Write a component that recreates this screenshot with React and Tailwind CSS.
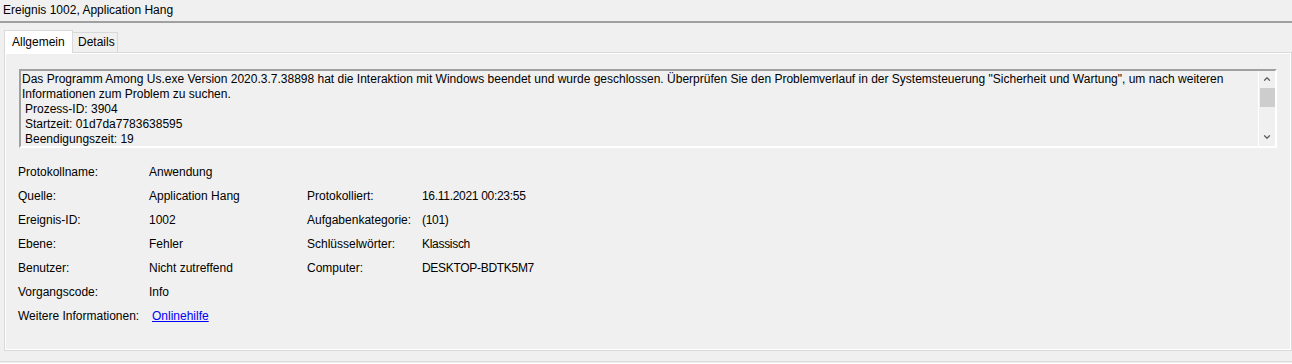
import { ChevronUp, ChevronDown } from 'lucide-react';

const rows = [
    { label: 'Protokollname:', value: 'Anwendung' },
    { label: 'Quelle:', value: 'Application Hang', label2: 'Protokolliert:', value2: '16.11.2021 00:23:55' },
    { label: 'Ereignis-ID:', value: '1002', label2: 'Aufgabenkategorie:', value2: '(101)' },
    { label: 'Ebene:', value: 'Fehler', label2: 'Schlüsselwörter:', value2: 'Klassisch' },
    { label: 'Benutzer:', value: 'Nicht zutreffend', label2: 'Computer:', value2: 'DESKTOP-BDTK5M7' },
    { label: 'Vorgangscode:', value: 'Info' },
];

export default function App() {
    return (
        <div className="w-[1292px] h-[364px] overflow-hidden bg-[#f0f0f0] text-[12px] text-black font-['Liberation_Sans',Arial,sans-serif] flex flex-col">
            {/* Title */}
            <div className="h-[23px] px-[3px] flex items-center border-b-2 border-[#a0a0a0] leading-none">
                Ereignis 1002, Application Hang
            </div>

            {/* Tabs */}
            <div className="flex items-end pl-[4px] pt-[6px] h-[29px]">
                <div className="h-[23px] w-[69px] pl-[7px] flex items-center bg-white border border-b-0 border-[#d9d9d9] relative top-[1px]">
                    Allgemein
                </div>
                <div className="h-[20px] w-[45px] pl-[5px] flex items-center border border-l-0 border-b-0 border-[#d9d9d9]">
                    Details
                </div>
            </div>

            {/* Panel */}
            <div className="ml-[4px] h-[300px] border border-[#d9d9d9]">
                <div className="h-full border border-white pt-[15px] pl-[13px] pr-[13px]">
                    {/* Description box */}
                    <div className="h-[79px] flex border-2 border-t-[#a0a0a0] border-l-[#a0a0a0] border-r-white border-b-white">
                        <div className="flex-1 pl-[1px] pt-[1px] leading-[15px] overflow-hidden">
                            <div>Das Programm Among Us.exe Version 2020.3.7.38898 hat die Interaktion mit Windows beendet und wurde geschlossen. Überprüfen Sie den Problemverlauf in der Systemsteuerung "Sicherheit und Wartung", um nach weiteren Informationen zum Problem zu suchen.</div>
                            <div className="pl-[3px]">Prozess-ID: 3904</div>
                            <div className="pl-[3px]">Startzeit: 01d7da7783638595</div>
                            <div className="pl-[3px]">Beendigungszeit: 19</div>
                        </div>
                        <div className="w-[17px] flex flex-col items-center border-l border-[#ffffff] bg-[#f0f0f0]">
                            <div className="h-[17px] flex items-center justify-center text-[#606060]">
                                <ChevronUp size={10} strokeWidth={3} />
                            </div>
                            <div className="w-[15px] h-[19px] bg-[#cdcdcd]" />
                            <div className="flex-1" />
                            <div className="h-[17px] flex items-center justify-center text-[#606060]">
                                <ChevronDown size={10} strokeWidth={3} />
                            </div>
                        </div>
                    </div>

                    {/* Properties */}
                    <div className="mt-[12px] -ml-[1px] grid grid-cols-[131px_158px_115px_1fr] auto-rows-[24px] items-center">
                        {rows.map((row) => (
                            <div key={row.label} className="contents">
                                <div>{row.label}</div>
                                <div>{row.value}</div>
                                <div>{row.label2}</div>
                                <div className="tracking-[-0.3px]">{row.value2}</div>
                            </div>
                        ))}
                        <div>Weitere Informationen:</div>
                        <div className="col-span-3 pl-[3px]">
                            <a href="#" className="text-[#0000ff] underline">Onlinehilfe</a>
                        </div>
                    </div>
                </div>
            </div>

            {/* Bottom strip */}
            <div className="mt-[10px] border-t border-[#d9d9d9] border-b border-b-white h-[3px]" />
        </div>
    );
}
